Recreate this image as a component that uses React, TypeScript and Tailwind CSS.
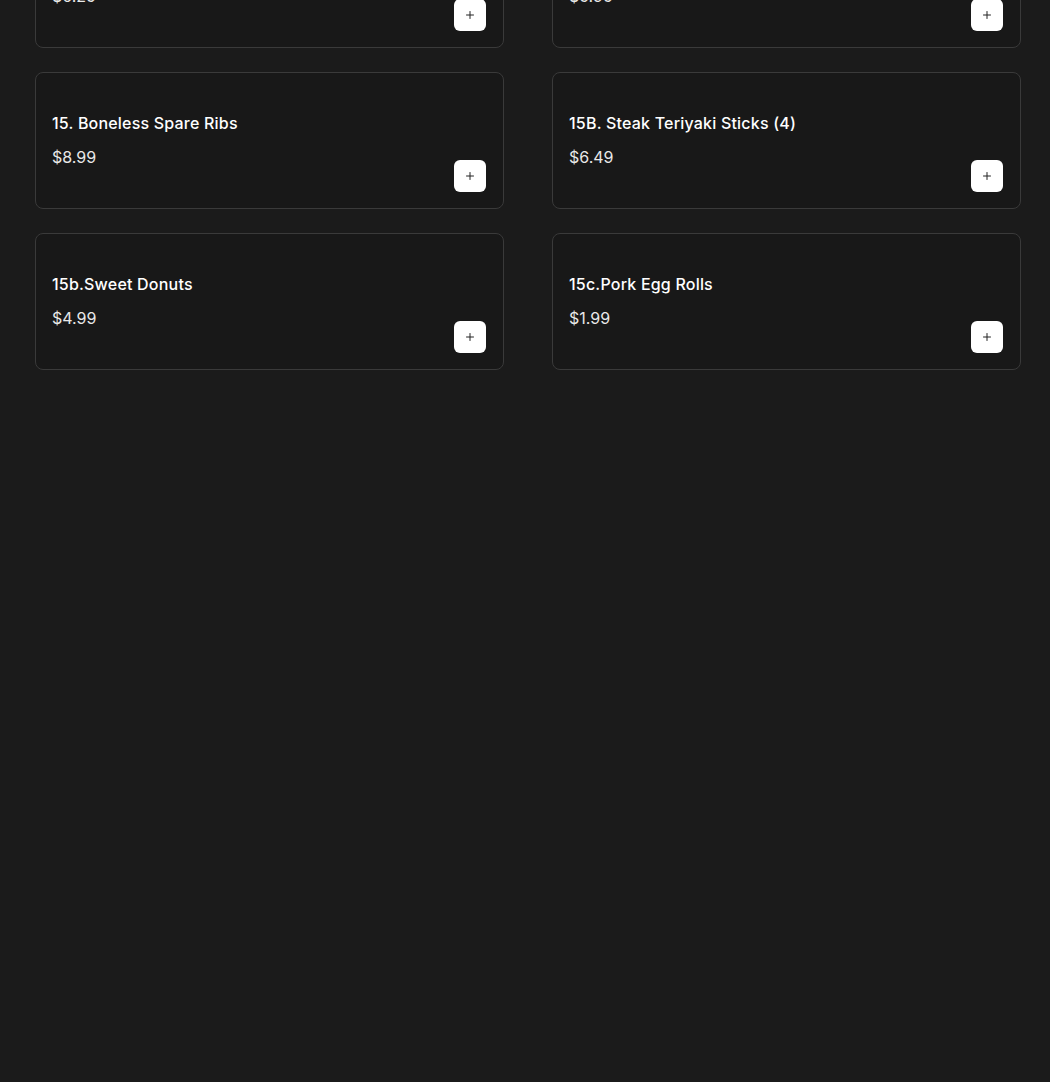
import { Plus } from 'lucide-react';

interface Item {
  name: string;
  price: string;
}

const items: Item[] = [
  { name: '14c. Chicken Wings (4)', price: '$6.25' },
  { name: '14d. Crab Rangoon (8)', price: '$5.95' },
  { name: '15. Boneless Spare Ribs', price: '$8.99' },
  { name: '15B. Steak Teriyaki Sticks (4)', price: '$6.49' },
  { name: '15b.Sweet Donuts', price: '$4.99' },
  { name: '15c.Pork Egg Rolls', price: '$1.99' },
];

function ItemCard({ item }: { item: Item }) {
  return (
    <div className="flex justify-between h-[137px] rounded-lg border border-[#3a3a3a] bg-[#181818]">
      <div className="flex flex-col gap-[10px] pl-4 pt-[38px]">
        <h3 className="text-white text-base font-medium leading-6 tracking-[0.2px]">{item.name}</h3>
        <p className="text-[#e8e8e8] text-base leading-6">{item.price}</p>
      </div>
      <button className="self-end mr-[17px] mb-4 flex items-center justify-center w-8 h-8 rounded-md bg-white text-[#222]">
        <Plus className="w-3 h-3" strokeWidth={2} />
      </button>
    </div>
  );
}

export default function App() {
  return (
    <div
      className="min-h-[1082px] bg-[#1b1b1b] overflow-hidden"
      style={{ fontFamily: 'Inter, "Open Sans", sans-serif' }}
    >
      <div className="-mt-[89px] grid grid-cols-2 gap-x-[48px] gap-y-[24px] pl-[35px] pr-[29px]">
        {items.map((item) => (
          <ItemCard key={item.name} item={item} />
        ))}
      </div>
    </div>
  );
}
